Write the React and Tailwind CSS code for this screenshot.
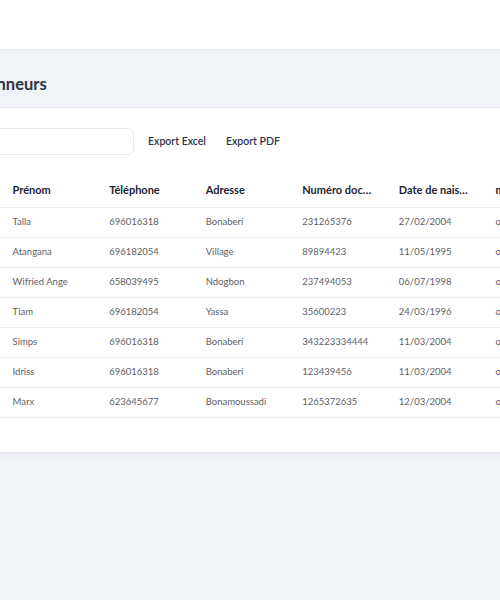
const rows = [
  ["Nkoulou", "Talla", "696016318", "Bonaberi", "231265376", "27/02/2004", "ouverture"],
  ["Mballa", "Atangana", "696182054", "Village", "89894423", "11/05/1995", "ouverture"],
  ["Kamga", "Wifried Ange", "658039495", "Ndogbon", "237494053", "06/07/1998", "ouverture"],
  ["Fotso", "Tiam", "696182054", "Yassa", "35600223", "24/03/1996", "ouverture"],
  ["Homer", "Simps", "696016318", "Bonaberi", "343223334444", "11/03/2004", "ouverture"],
  ["Njoya", "Idriss", "696016318", "Bonaberi", "123439456", "11/03/2004", "ouverture"],
  ["Karl", "Marx", "623645677", "Bonamoussadi", "1265372635", "12/03/2004", "ouverture"],
];

const cols = ["Nom", "Prénom", "Téléphone", "Adresse", "Numéro document", "Date de naissance", "motif"];

export default function App() {
  return (
    <div className="w-[500px] h-[600px] overflow-hidden bg-[#f0f3f8] text-[#2d3748]" style={{ fontFamily: "Lato, 'Noto Sans', sans-serif" }}>
      <header className="h-[50px] bg-white border-b border-[#e3e6ec]" />
      <div className="ml-[-121px] w-[900px]">
        <div className="h-[58px] flex items-center pt-[12px] pl-[22px] border-b border-[#e8ebf0]">
          <h1 className="text-[16.5px] font-bold text-[#2b3445]">Liste des abonneurs</h1>
        </div>
        <div className="bg-white shadow-[0_2px_6px_rgba(0,0,0,0.06)] pb-[34px]">
          <div className="flex items-center gap-[14px] pt-5 pl-[25px]">
            <input className="w-[230px] h-[27px] rounded-md border border-[#e6e8ee] px-3 text-[11px]" />
            <button className="text-[10.5px] font-semibold text-[#2b3445] px-0">Export Excel</button>
            <button className="text-[10.5px] font-semibold text-[#2b3445] ml-[6px]">Export PDF</button>
          </div>
          <table className="mt-[18px] ml-[25px] table-fixed border-collapse w-[676px]">
            <thead>
              <tr className="border-b border-[#eceef2]">
                {cols.map((c) => (
                  <th key={c} className="w-[96.5px] h-[34px] pl-3 pr-3 text-left text-[11px] font-bold text-[#1f2533] truncate">
                    {c}
                  </th>
                ))}
              </tr>
            </thead>
            <tbody>
              {rows.map((r, i) => (
                <tr key={i} className="border-b border-[#eceef2]">
                  {r.map((v, j) => (
                    <td key={j} className="h-[30px] pl-3 pr-2 text-[9.5px] text-[#5d6168] truncate">
                      {v}
                    </td>
                  ))}
                </tr>
              ))}
            </tbody>
          </table>
        </div>
      </div>
    </div>
  );
}
